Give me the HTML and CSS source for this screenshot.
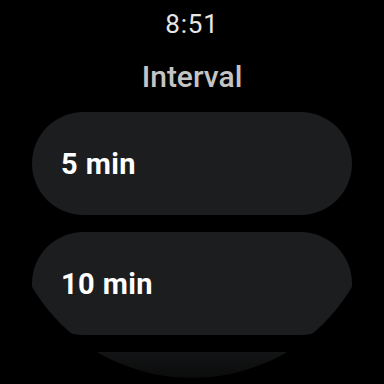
FILE: index.html
```html
<!DOCTYPE html>
<html>
<head>
<meta charset="utf-8">
<link rel="stylesheet" href="styles.css">
</head>
<body>
<div class="screen">
  <div class="time">8:51</div>
  <div class="title">Interval</div>
  <div class="list">
    <div class="chip"><span class="label">5 min</span></div>
    <div class="chip"><span class="label">10 min</span></div>
    <div class="chip chip-faded"></div>
  </div>
</div>
</body>
</html>
```
FILE: styles.css
```css
html, body {
  margin: 0;
  padding: 0;
  background: #000;
}
.screen {
  width: 384px;
  height: 384px;
  overflow: hidden;
  background: #000;
  clip-path: circle(186px at 50% 50%);
  display: flex;
  flex-direction: column;
  align-items: center;
  font-family: Roboto, "Liberation Sans", sans-serif;
}
.time {
  margin-top: 9px;
  font-size: 26px;
  line-height: 30px;
  color: #e6e6e6;
  letter-spacing: 0.8px;
}
.title {
  margin-top: 20px;
  font-size: 30px;
  line-height: 36px;
  font-weight: 500;
  color: #c4c4c4;
}
.list {
  margin-top: 17px;
  display: flex;
  flex-direction: column;
  gap: 17px;
}
.chip {
  width: 320px;
  height: 103px;
  border-radius: 52px;
  background: #1c1d1f;
  display: flex;
  align-items: center;
  box-sizing: border-box;
  padding-left: 29px;
  flex-shrink: 0;
}
.label {
  font-size: 29px;
  font-weight: 700;
  color: #fff;
  letter-spacing: 0.4px;
}
.chip-faded {
  background: linear-gradient(#131415, #060606 40%, #000 60%);
}
```
